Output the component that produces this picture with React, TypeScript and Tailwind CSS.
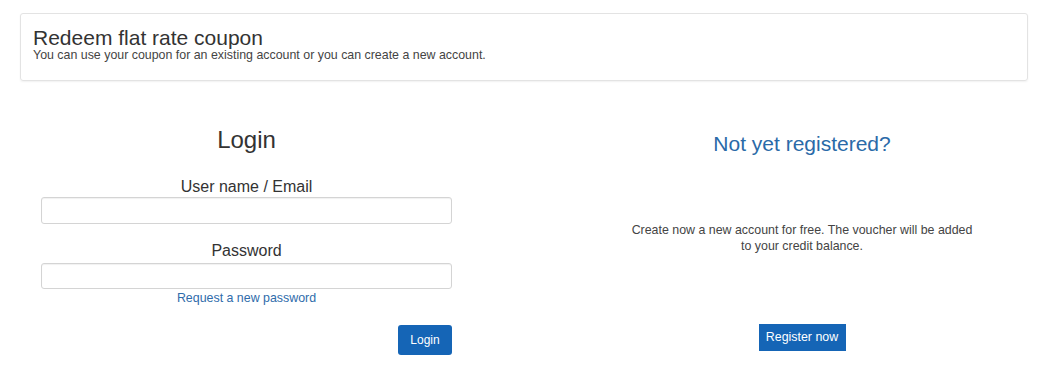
export default function App() {
  return (
    <div className="w-[1045px] h-[377px] bg-white pl-[20px] pr-[17px] pt-[13px] font-['Liberation_Sans',Arial,sans-serif] text-[#333]">
      <div className="h-[68px] border border-[#e3e3e3] rounded-[3px] shadow-[0_1px_2px_rgba(0,0,0,0.06)] pt-[14px] px-[12px]">
        <h1 className="text-[21px] leading-[20px] text-[#333]">Redeem flat rate coupon</h1>
        <p className="mt-[1px] text-[12.4px] leading-[13px] text-[#444]">
          You can use your coupon for an existing account or you can create a new account.
        </p>
      </div>

      <div className="flex items-start">
        <div className="ml-[21px] w-[411px] pt-[45px] flex flex-col">
          <h2 className="text-center text-[24px] leading-[28px]">Login</h2>
          <label className="mt-[23px] text-center text-[16px] leading-[20px]">User name / Email</label>
          <input
            type="text"
            className="h-[27px] border border-[#d4d4d4] rounded-[3px] shadow-[inset_0_1px_1px_rgba(0,0,0,0.06)] outline-none"
          />
          <label className="mt-[17px] mb-[2px] text-center text-[16px] leading-[20px]">Password</label>
          <input
            type="password"
            className="h-[26px] border border-[#d4d4d4] rounded-[3px] shadow-[inset_0_1px_1px_rgba(0,0,0,0.06)] outline-none"
          />
          <a className="mt-[1px] text-center text-[12.4px] leading-[16px] text-[#2f6cab]">Request a new password</a>
          <div className="flex justify-end mt-[19px]">
            <button className="w-[54px] h-[30px] rounded-[3px] bg-[#1565b6] text-white text-[12px]">Login</button>
          </div>
        </div>

        <div className="ml-[150px] w-[400px] pt-[50px] flex flex-col items-center">
          <h2 className="text-[21px] leading-[25px] text-[#2a6aa8]">Not yet registered?</h2>
          <p className="mt-[66px] w-[350px] text-center text-[12.4px] leading-[16px] text-[#444]">
            Create now a new account for free. The voucher will be added to your credit balance.
          </p>
          <button className="mt-[70px] w-[87px] h-[27px] bg-[#1565b6] text-white text-[12.4px]">Register now</button>
        </div>
      </div>
    </div>
  )
}
